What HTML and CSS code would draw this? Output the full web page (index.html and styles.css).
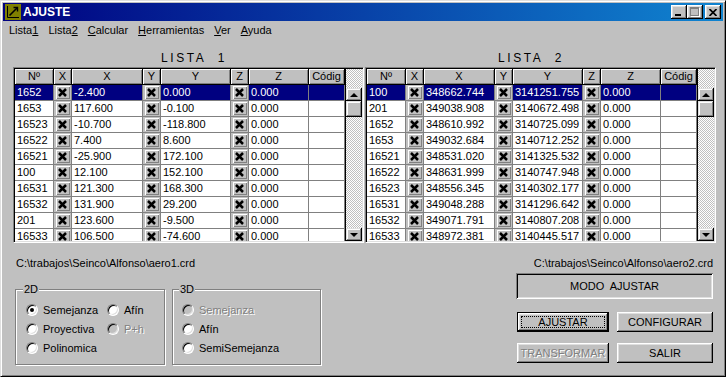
FILE: index.html
```html
<html>
<head>
    <link rel="stylesheet" href="styles.css">
</head>
<body>
<div class="window">
    <div class="titlebar">
        <svg class="appicon" width="16" height="16" viewBox="0 0 16 16">
            <rect width="16" height="16" fill="#808000"/>
            <path d="M2.5 2v11.5H14" stroke="#000" fill="none"/>
            <path d="M4.5 11.5L12 4" stroke="#000" stroke-width="1.6"/>
            <path d="M8.5 3.5h4v4" stroke="#000" stroke-width="1.4" fill="none"/>
        </svg>
        <span class="title">AJUSTE</span>
        <div class="winbtns">
            <span class="wbtn min"></span>
            <span class="wbtn max"></span>
            <span class="wbtn close">
                <svg width="8" height="7" viewBox="0 0 8 7"><path d="M0.5 0L7.5 7M7.5 0L0.5 7" stroke="#000" stroke-width="1.7"/></svg>
            </span>
        </div>
    </div>

    <div class="menubar">
        <span>Lista<u>1</u></span>
        <span>Lista<u>2</u></span>
        <span><u>C</u>alcular</span>
        <span><u>H</u>erramientas</span>
        <span><u>V</u>er</span>
        <span><u>A</u>yuda</span>
    </div>

    <div class="lists">
        <div class="list">
            <div class="caption cap1">LISTA  1</div>
            <div class="frame">
                <div class="grid" id="grid1">
                    <div class="hd">Nº</div><div class="hd">X</div><div class="hd">X</div><div class="hd">Y</div>
                    <div class="hd">Y</div><div class="hd">Z</div><div class="hd">Z</div><div class="hd">Códig</div>
                </div>
                <div class="vscroll">
                    <div class="sb-gap"></div>
                    <div class="sb-btn"><span class="arrow-up"></span></div>
                    <div class="sb-thumb"></div>
                    <div class="sb-track"></div>
                    <div class="sb-btn"><span class="arrow-down"></span></div>
                </div>
            </div>
        </div>
        <div class="list">
            <div class="caption cap2">LISTA  2</div>
            <div class="frame">
                <div class="grid" id="grid2">
                    <div class="hd">Nº</div><div class="hd">X</div><div class="hd">X</div><div class="hd">Y</div>
                    <div class="hd">Y</div><div class="hd">Z</div><div class="hd">Z</div><div class="hd">Códig</div>
                </div>
                <div class="vscroll">
                    <div class="sb-gap"></div>
                    <div class="sb-btn"><span class="arrow-up"></span></div>
                    <div class="sb-thumb"></div>
                    <div class="sb-track"></div>
                    <div class="sb-btn"><span class="arrow-down"></span></div>
                </div>
            </div>
        </div>
    </div>

    <div class="bottom">
        <div class="left">
            <div class="path">C:\trabajos\Seinco\Alfonso\aero1.crd</div>
            <div class="groups">
                <fieldset class="group g2d">
                    <legend>2D</legend>
                    <div class="opts">
                        <label class="opt"><span class="radio on"></span>Semejanza</label>
                        <label class="opt"><span class="radio"></span>Afín</label>
                        <label class="opt"><span class="radio"></span>Proyectiva</label>
                        <label class="opt off"><span class="radio"></span>P+h</label>
                        <label class="opt"><span class="radio"></span>Polinomica</label>
                    </div>
                </fieldset>
                <fieldset class="group g3d">
                    <legend>3D</legend>
                    <div class="opts one">
                        <label class="opt off"><span class="radio"></span>Semejanza</label>
                        <label class="opt"><span class="radio"></span>Afín</label>
                        <label class="opt"><span class="radio"></span>SemiSemejanza</label>
                    </div>
                </fieldset>
            </div>
        </div>
        <div class="right">
            <div class="path rpath">C:\trabajos\Seinco\Alfonso\aero2.crd</div>
            <div class="modo">MODO  AJUSTAR</div>
            <div class="buttons">
                <span class="btn default">AJUSTAR</span>
                <span class="btn">CONFIGURAR</span>
                <span class="btn disabled">TRANSFORMAR</span>
                <span class="btn">SALIR</span>
            </div>
        </div>
    </div>
</div>

<script>
    var list1 = [
        ["1652", "-2.400", "0.000", "0.000"],
        ["1653", "117.600", "-0.100", "0.000"],
        ["16523", "-10.700", "-118.800", "0.000"],
        ["16522", "7.400", "8.600", "0.000"],
        ["16521", "-25.900", "172.100", "0.000"],
        ["100", "12.100", "152.100", "0.000"],
        ["16531", "121.300", "168.300", "0.000"],
        ["16532", "131.900", "29.200", "0.000"],
        ["201", "123.600", "-9.500", "0.000"],
        ["16533", "106.500", "-74.600", "0.000"]
    ];
    var list2 = [
        ["100", "348662.744", "3141251.755", "0.000"],
        ["201", "349038.908", "3140672.498", "0.000"],
        ["1652", "348610.992", "3140725.099", "0.000"],
        ["1653", "349032.684", "3140712.252", "0.000"],
        ["16521", "348531.020", "3141325.532", "0.000"],
        ["16522", "348631.999", "3140747.948", "0.000"],
        ["16523", "348556.345", "3140302.177", "0.000"],
        ["16531", "349048.288", "3141296.642", "0.000"],
        ["16532", "349071.791", "3140807.208", "0.000"],
        ["16533", "348972.381", "3140445.517", "0.000"]
    ];

    var xmark = '<span class="xbtn"><svg width="9" height="9" viewBox="0 0 9 9">' +
                '<path d="M1 1L8 8M8 1L1 8" stroke="#000" stroke-width="2.5"/></svg></span>';

    var fillGrid = function (id, rows) {
        var grid = document.getElementById(id);
        rows.forEach(function (r, i) {
            var cls = i === 0 ? 'cell sel' : 'cell';
            var chk = '<div class="chk">' + xmark + '</div>';
            var html = '<div class="' + cls + '">' + r[0] + '</div>' + chk +
                       '<div class="' + cls + '">' + r[1] + '</div>' + chk +
                       '<div class="' + cls + '">' + r[2] + '</div>' + chk +
                       '<div class="' + cls + '">' + r[3] + '</div>' +
                       '<div class="' + cls + '"></div>';
            grid.insertAdjacentHTML('beforeend', html);
        });
    };

    fillGrid('grid1', list1);
    fillGrid('grid2', list2);
</script>
</body>
</html>
```

FILE: styles.css
```css
body {
    margin: 0;
    font-family: "Liberation Sans", Arial, sans-serif;
    font-size: 11px;
    color: #000;
    background: #c0c0c0;
}

.window {
    box-sizing: border-box;
    width: 726px;
    height: 377px;
    padding: 2px;
    border: 1px solid;
    border-color: #dfdfdf #000 #000 #dfdfdf;
    box-shadow: inset 1px 1px #fff, inset -1px -1px #808080;
    background: #c0c0c0;
    overflow: hidden;
}

/* title bar */
.titlebar {
    display: flex;
    align-items: center;
    height: 18px;
    padding-left: 2px;
    background: linear-gradient(to right, #000080, #1084d0);
}
.appicon { margin-right: 2px; }
.title {
    color: #fff;
    font-size: 12px;
    font-weight: bold;
}
.winbtns {
    display: flex;
    margin-left: auto;
    padding-right: 2px;
}
.wbtn {
    position: relative;
    width: 16px;
    height: 14px;
    background: #c0c0c0;
    box-shadow: inset -1px -1px #000, inset 1px 1px #fff, inset -2px -2px #808080, inset 2px 2px #dfdfdf;
}
.wbtn.min::after {
    content: "";
    position: absolute;
    left: 4px;
    top: 9px;
    width: 6px;
    height: 2px;
    background: #000;
}
.wbtn.max::after {
    content: "";
    position: absolute;
    left: 3px;
    top: 2px;
    width: 7px;
    height: 6px;
    border: 1px solid #808080;
    border-top-width: 2px;
    box-shadow: 1px 1px #fff;
}
.wbtn.close {
    margin-left: 2px;
    display: flex;
    align-items: center;
    justify-content: center;
}

/* menu */
.menubar {
    display: flex;
    height: 19px;
    line-height: 19px;
    padding-left: 1px;
}
.menubar span { padding: 0 5px; }

/* lists */
.lists {
    display: flex;
    gap: 1px;
    margin-left: 10px;
}
.caption {
    height: 14px;
    line-height: 14px;
    margin: 11px 0 2px;
    font-size: 12px;
    letter-spacing: 2.6px;
    white-space: pre;
}
.cap1 { padding-left: 148px; }
.cap2 { padding-left: 133px; }

.frame {
    display: flex;
    height: 176px;
    box-sizing: border-box;
    padding: 1px;
    border: 1px solid;
    border-color: #808080 #fff #fff #808080;
    box-shadow: inset 1px 1px #000, inset -1px -1px #dfdfdf;
}
.grid {
    display: grid;
    grid-template-columns: 39px 18px 71px 18px 70px 18px 60px 36px;
    grid-auto-rows: 16px;
    width: 330px;
    overflow: hidden;
    background: #fff;
    border-right: 1px solid #000;
}
.hd {
    box-sizing: border-box;
    text-align: center;
    line-height: 15px;
    background: #c0c0c0;
    border-right: 1px solid #000;
    border-bottom: 1px solid #000;
    box-shadow: inset 1px 1px #fff, inset -1px -1px #808080;
}
.cell {
    box-sizing: border-box;
    padding-left: 2px;
    line-height: 15px;
    white-space: nowrap;
    overflow: hidden;
    border-right: 1px solid #808080;
    border-bottom: 1px solid #808080;
}
.cell.sel {
    background: #000080;
    color: #fff;
}
.chk {
    box-sizing: border-box;
    display: flex;
    align-items: center;
    justify-content: center;
    background: #c0c0c0;
    border-right: 1px solid #808080;
    border-bottom: 1px solid #808080;
}
.xbtn {
    display: flex;
    align-items: center;
    justify-content: center;
    width: 14px;
    height: 13px;
    box-shadow: inset 1px 1px #fff, inset -1px -1px #808080;
}

/* scrollbar */
.vscroll {
    display: flex;
    flex-direction: column;
    width: 16px;
    background: repeating-conic-gradient(#c0c0c0 0 25%, #fff 0 50%) 0 0 / 2px 2px;
}
.sb-gap { height: 19px; }
.sb-track { flex: 1; }
.sb-btn, .sb-thumb {
    display: flex;
    align-items: center;
    justify-content: center;
    background: #c0c0c0;
    box-shadow: inset -1px -1px #000, inset 1px 1px #dfdfdf, inset -2px -2px #808080, inset 2px 2px #fff;
}
.sb-btn { height: 13px; }
.sb-thumb { height: 16px; }
.arrow-up {
    border-left: 4px solid transparent;
    border-right: 4px solid transparent;
    border-bottom: 4px solid #000;
}
.arrow-down {
    border-left: 4px solid transparent;
    border-right: 4px solid transparent;
    border-top: 4px solid #000;
}

/* bottom area */
.bottom {
    display: flex;
    padding: 0 10px 0 12px;
}
.path {
    margin-top: 14px;
    padding-left: 1px;
    line-height: 13px;
    white-space: nowrap;
}
.rpath {
    text-align: right;
    padding-left: 0;
}
.groups {
    display: flex;
    gap: 7px;
    margin-top: 13px;
}
.group {
    margin: 0;
    padding: 5px 0 7px 10px;
    border: 1px solid #808080;
    box-shadow: 1px 1px #fff, inset 1px 1px #fff;
}
.g2d { width: 150px; box-sizing: border-box; }
.g3d { width: 149px; box-sizing: border-box; padding-left: 9px; }
.group legend {
    margin-left: -3px;
    padding: 0 1px;
    line-height: 12px;
    background: #c0c0c0;
}
.opts {
    display: grid;
    grid-template-columns: 81px auto;
    grid-auto-rows: 19px;
}
.opts.one { grid-template-columns: auto; }
.opt {
    display: flex;
    align-items: center;
    gap: 5px;
    white-space: nowrap;
}
.opt.off {
    color: #808080;
    text-shadow: 1px 1px #fff;
}
.radio {
    position: relative;
    flex: none;
    box-sizing: border-box;
    width: 12px;
    height: 12px;
    border-radius: 50%;
    background: #fff;
    border: 1px solid;
    border-color: #808080 #fff #fff #808080;
    box-shadow: inset 1px 1px #000, inset -1px -1px #dfdfdf;
}
.opt.off .radio { background: #c0c0c0; }
.radio.on::after {
    content: "";
    position: absolute;
    left: 3px;
    top: 3px;
    width: 4px;
    height: 4px;
    border-radius: 50%;
    background: #000;
}

.right {
    margin-left: auto;
    width: 197px;
}
.modo {
    box-sizing: border-box;
    height: 26px;
    margin-top: 3px;
    line-height: 26px;
    text-align: center;
    white-space: pre;
    box-shadow: inset 1px 1px #808080, inset -1px -1px #fff, inset 2px 2px #000, inset -2px -2px #dfdfdf;
}
.buttons {
    display: grid;
    grid-template-columns: 92px 96px;
    grid-auto-rows: 20px;
    justify-content: space-between;
    row-gap: 11px;
    margin-top: 13px;
    padding-left: 1px;
}
.btn {
    position: relative;
    display: flex;
    align-items: center;
    justify-content: center;
    background: #c0c0c0;
    box-shadow: inset -1px -1px #000, inset 1px 1px #fff, inset -2px -2px #808080, inset 2px 2px #dfdfdf;
}
.btn.default {
    box-sizing: border-box;
    border: 1px solid #000;
}
.btn.default::after {
    content: "";
    position: absolute;
    inset: 3px;
    border: 1px dotted #000;
}
.btn.disabled {
    color: #808080;
    text-shadow: 1px 1px #fff;
}
```
